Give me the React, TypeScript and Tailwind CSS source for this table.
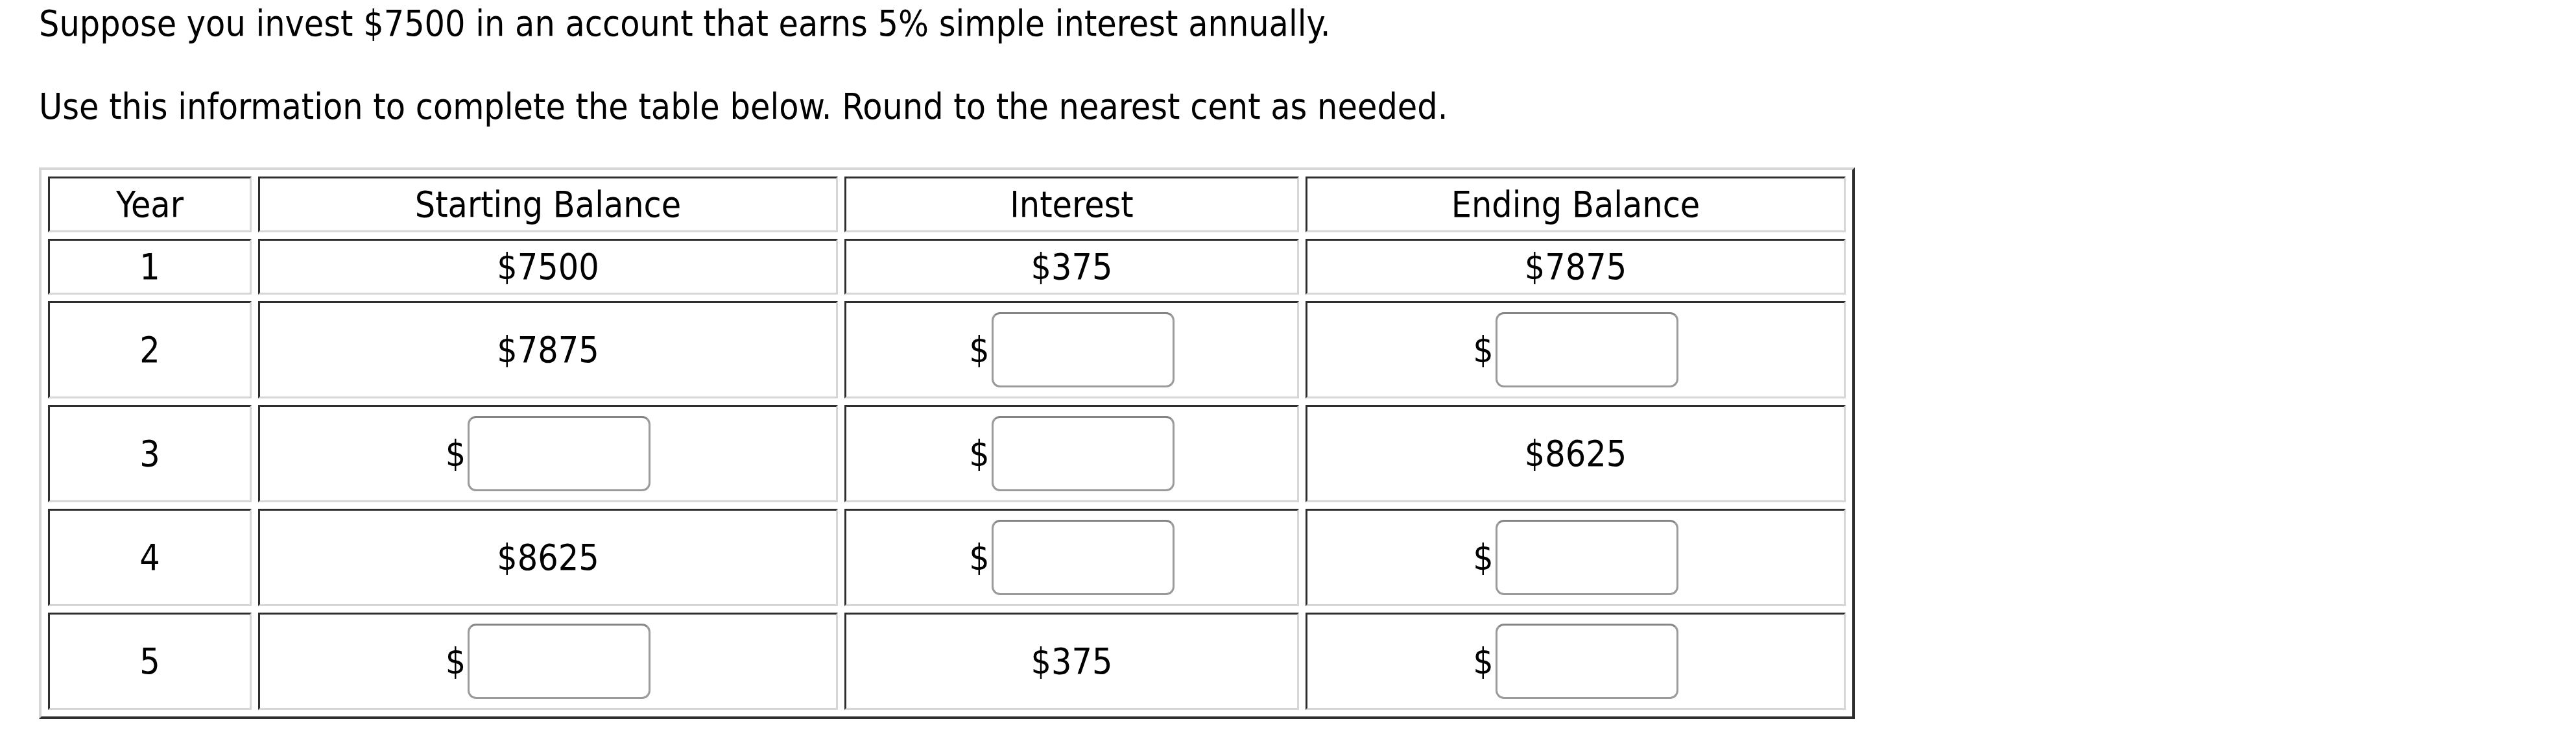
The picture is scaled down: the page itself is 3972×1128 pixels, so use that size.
const rows = [
  { year: '1', start: '$7500', interest: '$375', end: '$7875', tall: false },
  { year: '2', start: '$7875', interest: null, end: null, tall: true },
  { year: '3', start: null, interest: null, end: '$8625', tall: true },
  { year: '4', start: '$8625', interest: null, end: null, tall: true },
  { year: '5', start: null, interest: '$375', end: null, tall: true },
]

const cell =
  'p-0 text-center align-middle border-[3px] border-t-[#2e2e2e] border-l-[#2e2e2e] border-b-[#d6d6d6] border-r-[#d6d6d6] bg-white font-normal'

const MoneyInput = () => (
  <div className="flex items-center justify-center gap-[3px]">
    <span>$</span>
    <input
      type="text"
      className="h-[116px] w-[282px] rounded-[13px] border-[3px] border-[#9a9a9a] border-t-[#858585] bg-white outline-none"
    />
  </div>
)

const Value = ({ v }: { v: string | null }) => (v === null ? <MoneyInput /> : <>{v}</>)

export default function App() {
  return (
    <div className="min-h-screen bg-white px-[60px] font-['DejaVu_Sans_Condensed','DejaVu_Sans',sans-serif] text-[55px] leading-[64px] text-black [font-stretch:condensed]">
      <p className="pt-[4px]">
        Suppose you invest $7500 in an account that earns 5% simple interest annually.
      </p>
      <p className="mt-[64px]">
        Use this information to complete the table below. Round to the nearest cent as needed.
      </p>
      <table className="mt-[62px] w-[2800px] table-fixed border-separate border-spacing-[10px] border-[4px] border-t-[#d6d6d6] border-l-[#d6d6d6] border-b-[#2e2e2e] border-r-[#2e2e2e]">
        <colgroup>
          <col className="w-[314px]" />
          <col className="w-[894px]" />
          <col className="w-[701px]" />
          <col className="w-[833px]" />
        </colgroup>
        <thead>
          <tr>
            <th className={`${cell} h-[86px]`}>Year</th>
            <th className={`${cell} h-[86px]`}>Starting Balance</th>
            <th className={`${cell} h-[86px]`}>Interest</th>
            <th className={`${cell} h-[86px]`}>Ending Balance</th>
          </tr>
        </thead>
        <tbody>
          {rows.map((r) => (
            <tr key={r.year}>
              <td className={`${cell} ${r.tall ? 'h-[150px]' : 'h-[86px]'}`}>{r.year}</td>
              <td className={cell}>
                <Value v={r.start} />
              </td>
              <td className={cell}>
                <Value v={r.interest} />
              </td>
              <td className={cell}>
                <Value v={r.end} />
              </td>
            </tr>
          ))}
        </tbody>
      </table>
    </div>
  )
}
